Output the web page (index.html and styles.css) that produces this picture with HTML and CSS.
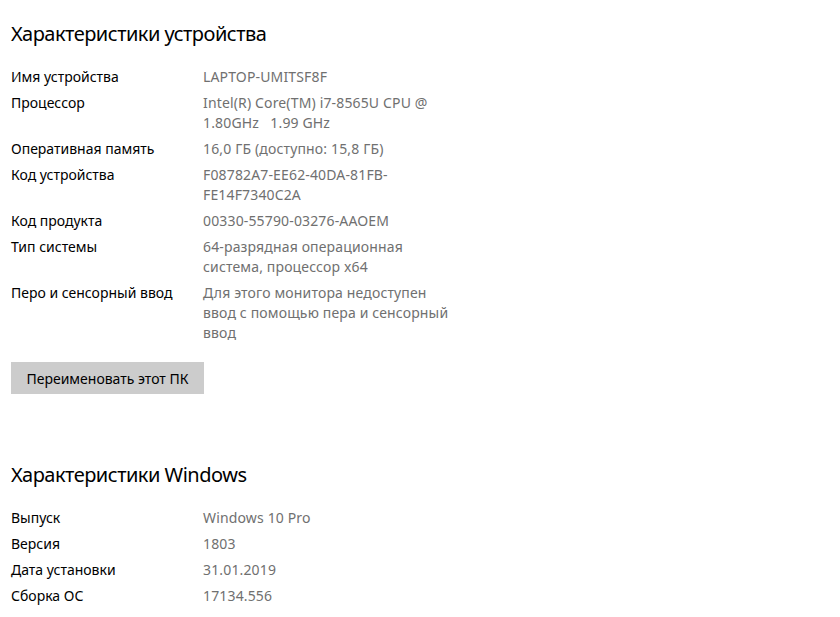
FILE: index.html
```html
<!DOCTYPE html>
<html lang="ru">
<head>
<meta charset="utf-8">
<link rel="stylesheet" href="styles.css">
</head>
<body>
<main class="page">
  <section class="section">
    <h2 class="title">Характеристики устройства</h2>
    <dl class="specs">
      <dt>Имя устройства</dt><dd>LAPTOP-UMITSF8F</dd>
      <dt>Процессор</dt><dd>Intel(R) Core(TM) i7-8565U CPU @<br>1.80GHz&nbsp;&nbsp;&nbsp;1.99 GHz</dd>
      <dt>Оперативная память</dt><dd>16,0 ГБ (доступно: 15,8 ГБ)</dd>
      <dt>Код устройства</dt><dd>F08782A7-EE62-40DA-81FB-<br>FE14F7340C2A</dd>
      <dt>Код продукта</dt><dd>00330-55790-03276-AAOEM</dd>
      <dt>Тип системы</dt><dd>64-разрядная операционная<br>система, процессор x64</dd>
      <dt>Перо и сенсорный ввод</dt><dd>Для этого монитора недоступен<br>ввод с помощью пера и сенсорный<br>ввод</dd>
    </dl>
    <button class="btn">Переименовать этот ПК</button>
  </section>
  <section class="section section-win">
    <h2 class="title">Характеристики Windows</h2>
    <dl class="specs">
      <dt>Выпуск</dt><dd>Windows 10 Pro</dd>
      <dt>Версия</dt><dd>1803</dd>
      <dt>Дата установки</dt><dd>31.01.2019</dd>
      <dt>Сборка ОС</dt><dd>17134.556</dd>
    </dl>
  </section>
</main>
</body>
</html>
```
FILE: styles.css
```css
* { box-sizing: border-box; }
html, body { margin: 0; background: #fff; }
body {
  font-family: "Noto Sans", "Open Sans", "Liberation Sans", sans-serif;
  font-size: 14px;
  color: #000;
}
.page {
  padding: 20px 0 0 11px;
}
.section { display: flex; flex-direction: column; align-items: flex-start; }
.section-win { margin-top: 67px; }
.title {
  margin: 0 0 19px;
  font-size: 20px;
  line-height: 28px;
  font-weight: 400;
  letter-spacing: -0.5px;
  color: #000;
}
.specs {
  margin: 0;
  display: grid;
  grid-template-columns: 192px 260px;
  row-gap: 6px;
  line-height: 20px;
}
.specs dt { margin: 0; color: #000; }
.specs dd { margin: 0; color: #707070; white-space: nowrap; letter-spacing: 0.15px; }
.btn {
  margin-top: 19px;
  height: 32px;
  width: 193px;
  border: 0;
  background: #cccccc;
  font: inherit;
  color: #000;
  padding: 0;
  text-align: center;
}
```
